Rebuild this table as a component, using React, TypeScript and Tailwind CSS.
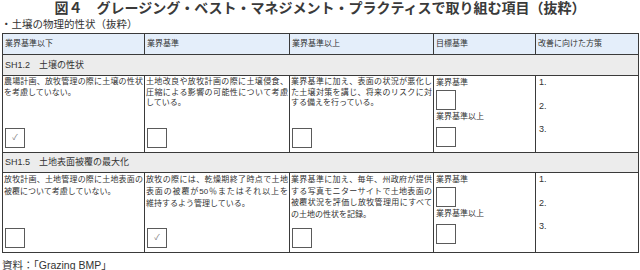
import React from 'react';

const font = { fontFamily: '"Liberation Sans", "Noto Sans CJK JP", sans-serif' };

function Box({ checked }: { checked?: boolean }) {
  return (
    <div className="w-[20px] h-[20px] border border-[#5a5a5a] bg-white flex items-center justify-center text-[8px] leading-none text-[#777]">
      {checked ? '✓' : ''}
    </div>
  );
}

function Lines({ lines, leading }: { lines: string[]; leading: string }) {
  return (
    <div className={`text-[8px] text-[#333] ${leading}`}>
      {lines.map((l, i) => (
        <div key={i} className={i < lines.length - 1 ? '[text-align-last:justify]' : ''}>
          {l}
        </div>
      ))}
    </div>
  );
}

function TextCell({ lines, leading, checked, border = true }: { lines: string[]; leading: string; checked?: boolean; border?: boolean }) {
  return (
    <div className={`flex flex-col justify-between px-[1px] pt-[1px] pb-[4px] ${border ? 'border-r border-[#3a3a3a]' : ''}`}>
      <Lines lines={lines} leading={leading} />
      <div className="pl-[1px]">
        <Box checked={checked} />
      </div>
    </div>
  );
}

function TargetCell() {
  return (
    <div className="flex flex-col pl-[2px] pt-[1px] border-r border-[#3a3a3a] text-[8px] text-[#333]">
      <div className="leading-[11px]">業界基準</div>
      <div className="mt-[2px]"><Box /></div>
      <div className="leading-[11px] mt-[1px]">業界基準以上</div>
      <div className="mt-[5px]"><Box /></div>
    </div>
  );
}

function PlanCell() {
  return (
    <div className="flex flex-col pl-[3px] pt-[1px] text-[9px] text-[#333] leading-[11px]">
      <div>1.</div>
      <div className="mt-[13px]">2.</div>
      <div className="mt-[12px]">3.</div>
    </div>
  );
}

const cols = 'grid grid-cols-[142px_145px_144px_102px_102px]';

export default function App() {
  const headers = ['業界基準以下', '業界基準', '業界基準以上', '目標基準', '改善に向けた方策'];

  return (
    <div className="w-[640px] h-[270px] bg-white overflow-hidden" style={font}>
      <div className="h-[17px] text-center text-[14px] font-bold leading-[17px] text-[#3a3a3a]">
        図４　グレージング・ベスト・マネジメント・プラクティスで取り組む項目（抜粋）
      </div>
      <div className="h-[16px] pl-[1px] text-[10.5px] leading-[14px] text-[#333]">・土壌の物理的性状（抜粋）</div>

      {/* table */}
      <div className="ml-[2px] w-[637px] border border-[#3a3a3a]">
        <div className={`${cols} h-[21px] bg-[#e4eefa] border-b border-[#3a3a3a]`}>
          {headers.map((h, i) => (
            <div key={i} className={`pl-[2px] text-[8px] leading-[20px] text-[#333] ${i < 4 ? 'border-r border-[#3a3a3a]' : ''}`}>
              {h}
            </div>
          ))}
        </div>

        <div className="h-[21px] bg-[#ececec] border-b border-[#3a3a3a] pl-[2px] text-[9px] leading-[20px] text-[#333]">
          SH1.2　土壌の性状
        </div>

        <div className={`${cols} h-[77px] border-b border-[#3a3a3a]`}>
          <TextCell leading="leading-[10.5px]" checked lines={['農場計画、放牧管理の際に土壌の性状', 'を考慮していない。']} />
          <TextCell leading="leading-[10.5px]" lines={['土地改良や放牧計画の際に土壌侵食、', '圧縮による影響の可能性について考慮', 'している。']} />
          <TextCell leading="leading-[10.5px]" lines={['業界基準に加え、表面の状況が悪化し', 'た土壌対策を講じ、将来のリスクに対', 'する備えを行っている。']} />
          <TargetCell />
          <PlanCell />
        </div>

        <div className="h-[20px] bg-[#ececec] border-b border-[#3a3a3a] pl-[2px] text-[9px] leading-[19px] text-[#333]">
          SH1.5　土地表面被覆の最大化
        </div>

        <div className={`${cols} h-[79px]`}>
          <TextCell leading="leading-[12px]" lines={['放牧計画、土地管理の際に土地表面の', '被覆について考慮していない。']} />
          <TextCell leading="leading-[12px]" checked lines={['放牧の際には、乾燥期終了時点で土地', '表面の被覆が50％またはそれ以上を', '維持するよう管理している。']} />
          <TextCell leading="leading-[11.5px]" lines={['業界基準に加え、毎年、州政府が提供', 'する写真モニターサイトで土地表面の', '被覆状況を評価し放牧管理用にすべて', 'の土地の性状を記録。']} />
          <TargetCell />
          <PlanCell />
        </div>
      </div>

      <div className="pl-[2px] pt-[5px] text-[10.5px] leading-[14px] text-[#333]">資料：「Grazing BMP」</div>
    </div>
  );
}
